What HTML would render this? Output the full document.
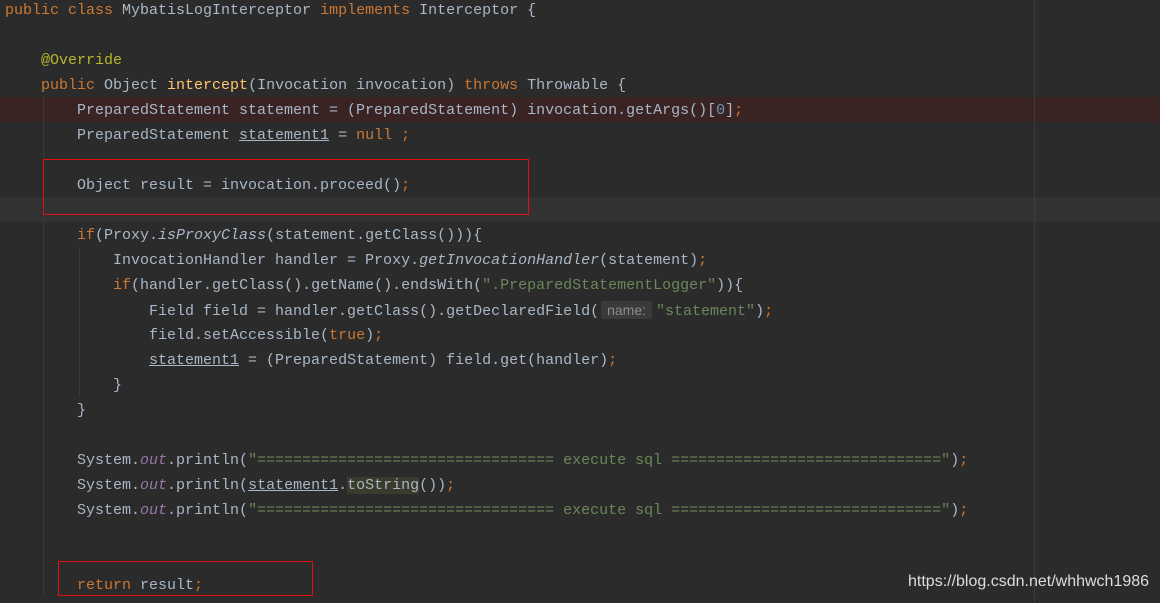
<!DOCTYPE html>
<html><head><style>
body{margin:0;width:1160px;height:603px;background:#2b2b2b;overflow:hidden;position:relative;font-family:"Liberation Mono",monospace;font-size:15px;color:#a9b7c6}
.l{position:absolute;left:5px;height:25px;line-height:25px;white-space:pre}
.k{color:#cc7832}.s{color:#6a8759}.a{color:#bbb529}.m{color:#ffc66d}.i{font-style:italic}.f{color:#9876aa;font-style:italic}.n{color:#6897bb}.u{text-decoration:underline}
.hint{background:#3b3b3b;color:#8c8c8c;font-family:"Liberation Sans",sans-serif;font-size:14px;border-radius:3px;padding:1px 6px;margin:0 4px 0 2px}
</style></head><body>
<div style="position:absolute;left:0;top:97px;width:1160px;height:25px;background:#3a2323"></div>
<div style="position:absolute;left:0;top:197px;width:1160px;height:25px;background:#323232"></div>
<div style="position:absolute;left:1034px;top:0;width:1px;height:603px;background:#3c3c3c"></div>
<div style="position:absolute;left:43px;top:97px;width:1px;height:500px;background:#393939"></div>
<div style="position:absolute;left:79px;top:247px;width:1px;height:150px;background:#393939"></div>
<div style="position:absolute;left:43px;top:159px;width:484px;height:54px;border:1px solid #e01010"></div>
<div style="position:absolute;left:58px;top:561px;width:253px;height:33px;border:1px solid #e01010"></div>
<div class="l" style="top:-2px"><span class="k">public class </span>MybatisLogInterceptor <span class="k">implements </span>Interceptor {</div>
<div class="l" style="top:48px">    <span class="a">@Override</span></div>
<div class="l" style="top:73px">    <span class="k">public </span>Object <span class="m">intercept</span>(Invocation invocation) <span class="k">throws </span>Throwable {</div>
<div class="l" style="top:98px">        PreparedStatement statement = (PreparedStatement) invocation.getArgs()[<span class="n">0</span>]<span class="k">;</span></div>
<div class="l" style="top:123px">        PreparedStatement <span class="u">statement1</span> = <span class="k">null ;</span></div>
<div class="l" style="top:173px">        Object result = invocation.proceed()<span class="k">;</span></div>
<div class="l" style="top:223px">        <span class="k">if</span>(Proxy.<span class="i">isProxyClass</span>(statement.getClass())){</div>
<div class="l" style="top:248px">            InvocationHandler handler = Proxy.<span class="i">getInvocationHandler</span>(statement)<span class="k">;</span></div>
<div class="l" style="top:273px">            <span class="k">if</span>(handler.getClass().getName().endsWith(<span class="s">".PreparedStatementLogger"</span>)){</div>
<div class="l" style="top:298px">                Field field = handler.getClass().getDeclaredField(<span class="hint">name:</span><span class="s">"statement"</span>)<span class="k">;</span></div>
<div class="l" style="top:323px">                field.setAccessible(<span class="k">true</span>)<span class="k">;</span></div>
<div class="l" style="top:348px">                <span class="u">statement1</span> = (PreparedStatement) field.get(handler)<span class="k">;</span></div>
<div class="l" style="top:373px">            }</div>
<div class="l" style="top:398px">        }</div>
<div class="l" style="top:448px">        System.<span class="f">out</span>.println(<span class="s">"================================= execute sql =============================="</span>)<span class="k">;</span></div>
<div class="l" style="top:473px">        System.<span class="f">out</span>.println(<span class="u">statement1</span>.<span style="background:#3b3b2b">toString</span>())<span class="k">;</span></div>
<div class="l" style="top:498px">        System.<span class="f">out</span>.println(<span class="s">"================================= execute sql =============================="</span>)<span class="k">;</span></div>
<div class="l" style="top:573px">        <span class="k">return </span>result<span class="k">;</span></div>
<div style="position:absolute;left:908px;top:573px;font-family:'Liberation Sans',sans-serif;font-size:16px;color:#ddd">https://blog.csdn.net/whhwch1986</div>
</body></html>
